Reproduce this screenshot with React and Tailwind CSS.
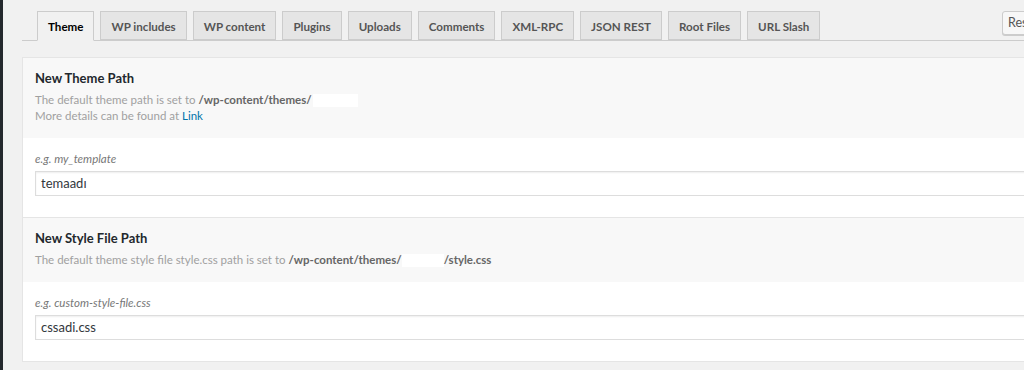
import React from "react";

const tabs = ["Theme", "WP includes", "WP content", "Plugins", "Uploads", "Comments", "XML-RPC", "JSON REST", "Root Files", "URL Slash"];

function Section({ title, desc, label, value, first }) {
  return (
    <div className={first ? "" : "border-t border-[#e5e5e5]"}>
      <div className="bg-[#f8f8f8] px-[12px] pt-[10px] pb-[14px]">
        <div className="text-[13px] leading-[20px] font-bold text-[#23282d]">{title}</div>
        <div className="mt-[4px] text-[11.5px] leading-[16px] text-[#a0a0a0]">{desc}</div>
      </div>
      <div className="bg-white px-[12px] pt-[13px] pb-[21px]">
        <div className="text-[11.5px] leading-[16px] italic text-[#777]">{label}</div>
        <div className="mt-[4px] h-[25px] border border-[#dddddd] bg-white shadow-[inset_0_1px_2px_rgba(0,0,0,0.07)] pl-[5px] flex items-center text-[13px] text-[#32373c]">
          {value}
        </div>
      </div>
    </div>
  );
}

export default function App() {
  return (
    <div className="flex min-h-[370px] h-[370px] overflow-hidden bg-[#f1f1f1]" style={{ fontFamily: 'Lato, "Open Sans", sans-serif' }}>
      <div className="w-[3px] shrink-0 bg-[#23282d]" />
      <div className="flex-1 min-w-0 pl-[19px]">
        <div className="flex items-start border-b border-[#cccccc] pt-[11px] pl-[15px] gap-[6px]">
          {tabs.map((t, i) =>
            i === 0 ? (
              <div key={t} className="-mb-px h-[30px] px-[10px] pt-[2px] flex items-center border border-[#cccccc] border-b-[#f1f1f1] bg-[#f1f1f1] text-[11.6px] font-bold text-black">
                {t}
              </div>
            ) : (
              <div key={t} className="h-[29px] px-[10px] pt-[2px] flex items-center border border-[#cccccc] bg-[#e5e5e5] text-[11.6px] font-bold text-[#555]">
                {t}
              </div>
            )
          )}
          <div className="ml-auto shrink-0 mr-[-40px] h-[24px] w-[62px] rounded-[3px] border border-[#cccccc] bg-[#f7f7f7] shadow-[0_1px_0_#ccc] px-[5px] flex items-center text-[12.5px] text-[#555]">
            Reset
          </div>
        </div>
        <div className="mt-[16px] mr-[-40px] border border-[#e5e5e5] bg-white">
          <Section
            first
            title="New Theme Path"
            desc={
              <>
                <div className="flex items-center">
                  The default theme path is set to&nbsp;<span className="font-bold text-[#666]">/wp-content/themes/</span>
                  <span className="inline-block w-[45px] h-[13px] bg-white ml-[1px]" />
                </div>
                <div>
                  More details can be found at <span className="text-[#0073aa]">Link</span>
                </div>
              </>
            }
            label="e.g. my_template"
            value="temaadı"
          />
          <Section
            title="New Style File Path"
            desc={
              <div className="flex items-center">
                The default theme style file style.css path is set to&nbsp;<span className="font-bold text-[#666]">/wp-content/themes/</span>
                <span className="inline-block w-[42px] h-[13px] bg-white" />
                <span className="font-bold text-[#666]">/style.css</span>
              </div>
            }
            label="e.g. custom-style-file.css"
            value="cssadi.css"
          />
        </div>
      </div>
    </div>
  );
}
